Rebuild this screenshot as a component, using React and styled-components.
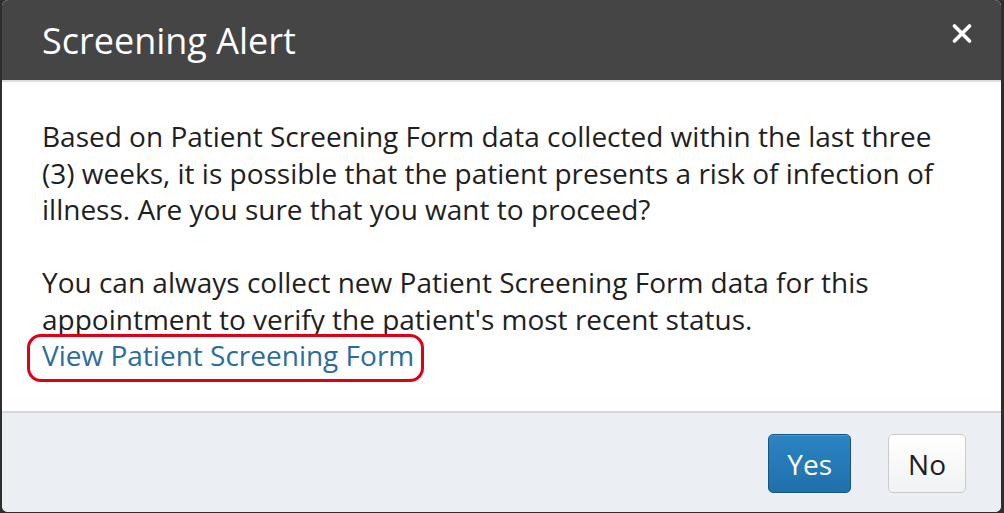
import React from 'react'
import styled, { createGlobalStyle } from 'styled-components'

const GlobalStyle = createGlobalStyle`
  html, body {
    margin: 0;
    padding: 0;
    background: #2e2e2e;
    font-family: "Open Sans", "Liberation Sans", sans-serif;
  }
`

const Backdrop = styled.div`
  padding: 0 3px 1px 2px;
  height: 513px;
  box-sizing: border-box;
  background: #2e2e2e;
`

const Modal = styled.div`
  height: 100%;
  display: flex;
  flex-direction: column;
  border-radius: 6px;
  overflow: hidden;
  background: #fff;
`

const Header = styled.div`
  height: 80px;
  flex-shrink: 0;
  display: flex;
  align-items: center;
  justify-content: space-between;
  padding: 0 29px 0 40px;
  background: #454545;
  border-bottom: 2px solid #dcdcdc;
`

const Title = styled.h1`
  margin: 0;
  font-size: 36px;
  font-weight: 400;
  color: #fff;
`

const CloseButton = styled.button`
  border: none;
  background: none;
  padding: 0;
  margin-bottom: 13px;
  width: 20px;
  height: 19px;
  cursor: pointer;
  display: flex;
`

const Body = styled.div`
  flex: 1;
  padding: 36px 40px 0 40px;
  font-size: 28px;
  line-height: 36.5px;
  color: #1f1f1f;
`

const Paragraph = styled.p`
  margin: 0 0 ${p => (p.$spaced ? '36.5px' : '0')} 0;
`

const LinkWrap = styled.span`
  position: relative;
  display: inline-block;

  &::after {
    content: '';
    position: absolute;
    top: -3px;
    bottom: -8px;
    left: -15px;
    right: -10px;
    border: 3px solid #e00016;
    border-radius: 14px;
    pointer-events: none;
  }
`

const Link = styled.a`
  color: #2a6d9e;
  text-decoration: none;
  cursor: pointer;
`

const Footer = styled.div`
  height: 101px;
  box-sizing: border-box;
  flex-shrink: 0;
  display: flex;
  align-items: flex-start;
  justify-content: flex-end;
  gap: 37px;
  padding: 21px 35px 0 0;
  background: #ebeef2;
  border-top: 2px solid #d3d7db;
`

const Button = styled.button`
  height: 59px;
  padding: 0 ${p => (p.$primary ? '18px' : '19px')};
  font-family: "Open Sans", "Liberation Sans", sans-serif;
  font-size: 28px;
  border-radius: 5px;
  cursor: pointer;
  color: ${p => (p.$primary ? '#fff' : '#1e1e1e')};
  border: 1px solid ${p => (p.$primary ? '#17557f' : '#c9cbcd')};
  background: ${p =>
    p.$primary
      ? 'linear-gradient(#2b84c4, #1f70aa)'
      : 'linear-gradient(#ffffff, #f1f2f3)'};
  box-shadow: ${p => (p.$primary ? 'inset 0 1px 0 rgba(255,255,255,0.15)' : 'none')};
`

const CloseIcon = () => (
  <svg width="20" height="19" viewBox="0 0 20 19">
    <path d="M2.5 2 L17.5 17 M17.5 2 L2.5 17" stroke="#fff" strokeWidth="3.6" strokeLinecap="round" />
  </svg>
)

const App = () => {
  return (
    <>
      <GlobalStyle />
      <Backdrop>
        <Modal>
          <Header>
            <Title>Screening Alert</Title>
            <CloseButton aria-label="Close">
              <CloseIcon />
            </CloseButton>
          </Header>
          <Body>
            <Paragraph $spaced>
              Based on Patient Screening Form data collected within the last three (3) weeks, it is
              possible that the patient presents a risk of infection of illness. Are you sure that you
              want to proceed?
            </Paragraph>
            <Paragraph>
              You can always collect new Patient Screening Form data for this appointment to verify
              the patient's most recent status.
            </Paragraph>
            <LinkWrap>
              <Link>View Patient Screening Form</Link>
            </LinkWrap>
          </Body>
          <Footer>
            <Button $primary>Yes</Button>
            <Button>No</Button>
          </Footer>
        </Modal>
      </Backdrop>
    </>
  )
}

export default App
